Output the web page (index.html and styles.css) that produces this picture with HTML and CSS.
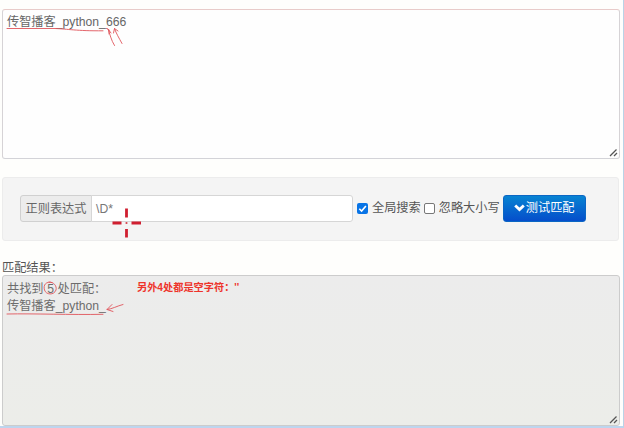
FILE: index.html
```html
<!DOCTYPE html>
<html lang="zh-CN">
<head>
<meta charset="utf-8">
<title>正则表达式测试</title>
<link rel="stylesheet" href="styles.css">
</head>
<body>
<main class="page">
  <div class="box source">传智播客_python_666
    <svg class="grip" viewBox="0 0 9 9"><path d="M1 8 7.500 1.500M5 8 8 5"/></svg>
  </div>
  <form class="panel">
    <span class="addon">正则表达式</span>
    <span class="pattern">\D*</span>
    <span class="check on"><svg viewBox="0 0 11 11"><path d="M2.3 5.7 4.6 8 8.9 3"/></svg></span>
    <span class="option">全局搜索</span>
    <span class="check"></span>
    <span class="option">忽略大小写</span>
    <button class="submit" type="button"><svg viewBox="0 0 11 8"><path d="M1.2 1.5 5.5 5.5 9.8 1.5"/></svg>测试匹配</button>
  </form>
  <div class="caption">匹配结果：</div>
  <div class="box result">共找到<span class="count">5</span>处匹配：<br>传智播客_python_
    <svg class="grip" viewBox="0 0 9 9"><path d="M1 8 7.500 1.500M5 8 8 5"/></svg>
  </div>
</main>
<svg class="marks" viewBox="0 0 624 428">
  <g class="pen">
    <path d="M7 28.500H55C68 29 76 31 103 30.800"/>
    <path d="M114.500 45.500C111 40 110 34 108 29L106.500 28.500M108 29L111 33M109 30V34"/>
    <path d="M122 43.500C119 38 116 33 114.500 28.500L113.500 33M114.500 28.500L118 31"/>
    <path d="M7 314C35 313.400 70 315 103 314.300"/>
    <path d="M123 304.500C117 306 112 309 107 309.500L112 304.500M107 309.500L113 311.500"/>
    <path d="M52 282.500C46 281 43 285 44.500 290C46 295 54 295.500 56 290C57 286 54 282 49 282"/>
  </g>
  <g class="target">
    <path d="M126.500 208.500V217.500M126.500 229V237.500M112.500 223H121.500M131.500 223H141"/>
    <circle cx="126.500" cy="223" r="1.100"/>
  </g>
</svg>
<div class="note">另外4处都是空字符：''</div>
</body>
</html>
```
FILE: styles.css
```css
* { box-sizing: border-box; }

body {
  margin: 0;
  width: 624px;
  height: 428px;
  overflow: hidden;
  position: relative;
  background: #fefefc;
  border-right: 1px solid #b9d3e6;
  border-bottom: 2px solid #bdd5ee;
  font: 12.2px/17px "Liberation Sans", "Noto Sans CJK SC", sans-serif;
  color: #666;
}

.page {
  display: flex;
  flex-direction: column;
  padding: 9px 3px 0 2px;
}

.box {
  position: relative;
  border: 1px solid #ccc;
  border-radius: 3px;
  padding: 4px;
}

.source {
  height: 150px;
  border-color: #e8cbc9 #d6d3d6 #d3d3d8;
  background: #fefefe;
}

.result {
  height: 151px;
  padding-top: 5px;
  background: linear-gradient(#ececec, #ecede9);
  color: #6c6c6c;
}

.grip {
  position: absolute;
  right: 1px;
  bottom: 1px;
  width: 9px;
  height: 9px;
  fill: none;
  stroke: #555;
  stroke-width: 1.3;
}

.panel {
  display: flex;
  align-items: center;
  height: 64px;
  margin: 18px 1px 0 0;
  padding: 0 17px 2px;
  border: 1px solid #ececec;
  border-radius: 3px;
  background: #f4f4f4;
}

.addon, .pattern {
  height: 27px;
  line-height: 26px;
  border: 1px solid #d0d0d0;
}

.addon {
  width: 72px;
  text-align: center;
  background: #ececec;
  border-radius: 3px 0 0 3px;
}

.pattern {
  width: 262px;
  margin-left: -1px;
  padding-left: 4px;
  background: #fff;
  border-color: #d6d6d6;
  border-radius: 0 3px 3px 0;
  color: #777;
}

.check {
  width: 11px;
  height: 11px;
  margin-left: 3px;
  border: 1px solid #777;
  border-radius: 2px;
  background: #fff;
}

.on {
  margin-left: 4px;
  border: 0;
  background: #0874e6;
}

.on svg {
  display: block;
  fill: none;
  stroke: #fff;
  stroke-width: 1.6;
}

.option {
  margin-left: 4px;
  color: #555;
  white-space: nowrap;
}

.submit {
  display: flex;
  align-items: center;
  justify-content: center;
  width: 83px;
  height: 27px;
  margin-left: 3px;
  padding: 0;
  border: 1px solid #0b66c4;
  border-radius: 3px;
  background: linear-gradient(#0783d2, #054ecb);
  color: #fff;
  font: inherit;
  white-space: nowrap;
}

.submit svg {
  width: 11px;
  height: 8px;
  margin-right: 1px;
  fill: none;
  stroke: #fff;
  stroke-width: 2.9;
}

.caption {
  height: 16px;
  margin-top: 18px;
  line-height: 19px;
  color: #555;
}

.count {
  display: inline-block;
  width: 14px;
  text-align: center;
}

.marks {
  position: absolute;
  left: 0;
  top: 0;
  width: 624px;
  height: 428px;
  pointer-events: none;
}

.pen {
  fill: none;
  stroke: #e0555b;
  stroke-width: 0.9;
  stroke-linecap: round;
  stroke-linejoin: round;
}

.target {
  fill: #d5404a;
  stroke: #d01f30;
  stroke-width: 2.8;
}

.target circle { stroke: none; }

.note {
  position: absolute;
  left: 137px;
  top: 279px;
  font-size: 10.2px;
  font-weight: bold;
  color: #ee342b;
  white-space: nowrap;
}
```
